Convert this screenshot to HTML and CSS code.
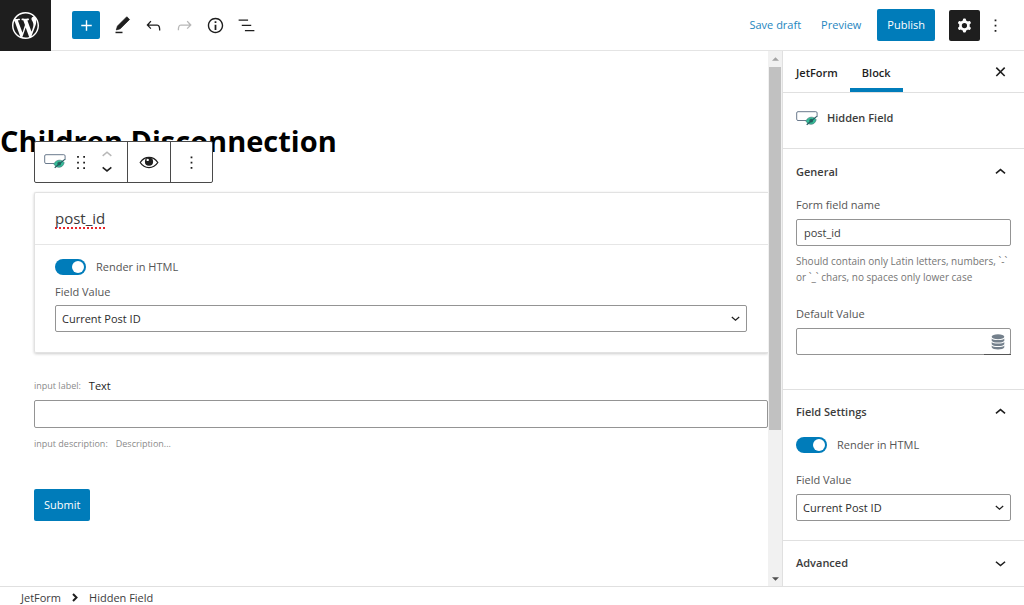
FILE: index.html
```html
<!DOCTYPE html>
<html lang="en">
<head>
<meta charset="utf-8">
<title>Edit form</title>
<link rel="stylesheet" href="styles.css">
</head>
<body>
<svg class="sprite" aria-hidden="true">
  <symbol id="i-wp" viewBox="0 0 20 20"><path d="M20 10c0-5.51-4.49-10-10-10C4.48 0 0 4.49 0 10c0 5.52 4.48 10 10 10 5.51 0 10-4.48 10-10zM7.78 15.37L4.37 6.22c.55-.02 1.17-.08 1.17-.08.5-.06.44-1.13-.06-1.11 0 0-1.45.11-2.37.11-.18 0-.37 0-.58-.01C4.12 2.69 6.87 1.11 10 1.11c2.33 0 4.45.87 6.05 2.34-.68-.11-1.65.39-1.65 1.58 0 .74.45 1.36.9 2.1.35.61.55 1.36.55 2.46 0 1.49-1.4 5-1.4 5l-3.03-8.37c.54-.02.82-.17.82-.17.5-.05.44-1.25-.06-1.22 0 0-1.44.12-2.38.12-.87 0-2.33-.12-2.33-.12-.5-.03-.56 1.2-.06 1.22l.92.08 1.26 3.41zM17.41 10c.24-.64.74-1.87.43-4.25.7 1.29 1.05 2.71 1.05 4.25 0 3.29-1.73 6.24-4.4 7.78.97-2.59 1.94-5.2 2.92-7.78zM6.1 18.09C3.12 16.65 1.11 13.53 1.11 10c0-1.3.23-2.48.72-3.59C3.25 10.3 4.67 14.2 6.1 18.09zm4.03-6.63l2.58 6.98c-.86.29-1.76.45-2.71.45-.79 0-1.57-.11-2.29-.33.81-2.38 1.62-4.74 2.42-7.1z"/></symbol>
  <symbol id="i-plus" viewBox="0 0 24 24"><path d="M18 11.2h-5.2V6h-1.6v5.2H6v1.6h5.2V18h1.6v-5.2H18z"/></symbol>
  <symbol id="i-edit" viewBox="0 0 24 24"><path d="M20.1 5.1L16.9 2 6.2 12.7l-1.3 4.4 4.5-1.3L20.1 5.1z" stroke="currentColor" stroke-width=".8"/><path d="M4 20.800h8v-1.700H4z"/></symbol>
  <symbol id="i-undo" viewBox="0 0 24 24"><path d="M18.3 11.7c-.6-.6-1.4-.9-2.3-.9H6.7l2.9-3.3-1.1-1-4.5 5L8.500 16l1-1-2.7-2.7H16c.5 0 .9.2 1.3.5 1 1 1 3.4 1 4.5v.3h1.5v-.2c0-1.5 0-4.3-1.5-5.7z"/></symbol>
  <symbol id="i-redo" viewBox="0 0 24 24"><path d="M15.6 6.5l-1.1 1 2.9 3.3H8c-.9 0-1.7.3-2.3.9-1.4 1.5-1.4 4.2-1.4 5.6v.2h1.5v-.3c0-1.1 0-3.5 1-4.5.3-.3.7-.5 1.3-.5h9.2L14.500 15l1.1 1.1 4.6-4.6-4.6-5z"/></symbol>
  <symbol id="i-info" viewBox="0 0 24 24"><path d="M12 3.2c-4.8 0-8.8 3.9-8.8 8.8 0 4.8 3.9 8.8 8.8 8.8 4.8 0 8.8-3.9 8.8-8.8 0-4.8-4-8.8-8.8-8.8zm0 16c-4 0-7.2-3.3-7.2-7.2C4.8 8 8 4.8 12 4.8s7.2 3.3 7.2 7.2c0 4-3.2 7.2-7.2 7.2zM11 17h2v-6h-2v6zm0-8h2V7h-2v2z"/></symbol>
  <symbol id="i-list" viewBox="0 0 24 24"><path d="M13.8 5.2H3v1.5h10.8V5.2zm-3.6 12v1.5H21v-1.5H10.2zm7.2-6H6.6v1.5h10.8v-1.5z"/></symbol>
  <symbol id="i-cog" viewBox="0 0 24 24"><path fill-rule="evenodd" d="M10.289 4.836A1 1 0 0111.275 4h1.306a1 1 0 01.987.836l.244 1.466c.787.26 1.503.679 2.108 1.218l1.393-.522a1 1 0 011.216.437l.653 1.13a1 1 0 01-.23 1.273l-1.148.944a6.025 6.025 0 010 2.435l1.149.946a1 1 0 01.23 1.272l-.653 1.13a1 1 0 01-1.216.437l-1.394-.522c-.605.54-1.32.958-2.108 1.218l-.244 1.466a1 1 0 01-.987.836h-1.306a1 1 0 01-.986-.836l-.244-1.466a5.995 5.995 0 01-2.108-1.218l-1.394.522a1 1 0 01-1.217-.436l-.653-1.131a1 1 0 01.23-1.272l1.149-.946a6.026 6.026 0 010-2.435l-1.148-.944a1 1 0 01-.23-1.272l.653-1.131a1 1 0 011.217-.437l1.393.522a5.994 5.994 0 012.108-1.218l.244-1.466zM14.929 12a3 3 0 11-6 0 3 3 0 016 0z"/></symbol>
  <symbol id="i-more" viewBox="0 0 24 24"><path d="M13 19h-2v-2h2v2zm0-6h-2v-2h2v2zm0-6h-2V5h2v2z"/></symbol>
  <symbol id="i-drag" viewBox="0 0 24 24"><path d="M7 6.500h2V4.500H7zM7 13h2v-2H7zM7 19.500h2v-2H7zM14 6.500h2V4.500h-2zM14 13h2v-2h-2zM14 19.500h2v-2h-2z"/></symbol>
  <symbol id="i-close" viewBox="0 0 24 24"><path d="M7.200 7.600l9.600 9.600M16.800 7.600l-9.600 9.600" fill="none" stroke="currentColor" stroke-width="1.800"/></symbol>
  <symbol id="i-down" viewBox="0 0 24 24"><path d="M6.800 10l5.200 4.300 5.200-4.300" fill="none" stroke="currentColor" stroke-width="1.800"/></symbol>
  <symbol id="i-up" viewBox="0 0 24 24"><path d="M6.800 13l5.200-4.300 5.200 4.300" fill="none" stroke="currentColor" stroke-width="1.800"/></symbol>
  <symbol id="i-right" viewBox="0 0 12 12"><path d="M4 2l3.500 3.500L4 9" fill="none" stroke="currentColor" stroke-width="2"/></symbol>
  <symbol id="i-eye" viewBox="0 0 20 14"><path d="M1.200 7.500C3.300 4.300 6.400 2.400 10 2.400s6.700 1.900 8.800 5.100c-2.100 3.200-5.200 5.100-8.800 5.100S3.300 10.700 1.200 7.500z" fill="none" stroke="currentColor" stroke-width="1.300"/><circle cx="10" cy="6.700" r="4.100"/><circle cx="8.700" cy="4.900" r="1.200" fill="#fff"/></symbol>
  <symbol id="i-hidden" viewBox="0 0 22 16"><path d="M10 9.500H2A1.300 1.300 0 0 1 .700 8.200V2A1.300 1.300 0 0 1 2 .700h17.800A1.300 1.300 0 0 1 21.100 2v4" fill="none" stroke="#6a7a8d" stroke-width="1"/><path d="M9.800 10c1.500-2.700 3.400-3.800 5.600-3.800 2 0 3.700.8 4.800 2.600-.9 3-2.700 4.500-5.200 4.500-2.100 0-3.900-1.100-5.200-3.300z" fill="#35bd98" stroke="#3a6f70" stroke-width=".6"/><circle cx="15.200" cy="9.700" r="1.900" fill="#26675f"/><path d="M10.700 13.800L20.800 5.400" stroke="#245b60" stroke-width="1.200"/></symbol>
  <symbol id="i-db" viewBox="0 0 14 16"><ellipse cx="7" cy="2.800" rx="6.300" ry="2.500"/><path d="M.700 4.600c1 2 11.600 2 12.600 0v2.100c-1 2.500-11.600 2.500-12.600 0zM.700 8.100c1 2 11.600 2 12.600 0v2.100c-1 2.500-11.600 2.500-12.600 0zM.700 11.600c1 2 11.600 2 12.600 0v1.600c-1 2.900-11.600 2.900-12.600 0z"/></symbol>
</svg>

<div class="app">
  <header class="topbar">
    <a class="logo" href="#" aria-label="View posts"><svg class="logo-icon"><use href="#i-wp"/></svg></a>
    <div class="tools">
      <button class="add" aria-label="Add block"><svg class="icon"><use href="#i-plus"/></svg></button>
      <button class="tool" aria-label="Edit"><svg class="icon"><use href="#i-edit"/></svg></button>
      <button class="tool" aria-label="Undo"><svg class="icon"><use href="#i-undo"/></svg></button>
      <button class="tool tool-off" aria-label="Redo"><svg class="icon"><use href="#i-redo"/></svg></button>
      <button class="tool" aria-label="Details"><svg class="icon"><use href="#i-info"/></svg></button>
      <button class="tool" aria-label="List view"><svg class="icon"><use href="#i-list"/></svg></button>
    </div>
    <div class="actions">
      <button class="link-btn">Save draft</button>
      <button class="link-btn">Preview</button>
      <button class="primary publish">Publish</button>
      <button class="settings" aria-label="Settings"><svg class="icon"><use href="#i-cog"/></svg></button>
      <button class="menu" aria-label="Options"><svg class="icon"><use href="#i-more"/></svg></button>
    </div>
  </header>

  <div class="body">
    <main class="canvas">
      <h1 class="title">Children Disconnection</h1>
      <div class="blocks">
        <div class="block-toolbar" role="toolbar" aria-label="Block tools">
          <div class="group group-main">
            <button class="tb" aria-label="Hidden Field"><svg class="field-icon"><use href="#i-hidden"/></svg></button>
            <button class="tb" aria-label="Drag"><svg class="icon"><use href="#i-drag"/></svg></button>
            <div class="movers">
              <button class="mover tool-off" aria-label="Move up"><svg class="mover-icon"><use href="#i-up"/></svg></button>
              <button class="mover" aria-label="Move down"><svg class="mover-icon"><use href="#i-down"/></svg></button>
            </div>
          </div>
          <div class="group"><button class="tb" aria-label="Show"><svg class="eye-icon"><use href="#i-eye"/></svg></button></div>
          <div class="group"><button class="tb" aria-label="More"><svg class="icon"><use href="#i-more"/></svg></button></div>
        </div>

        <section class="card">
          <div class="card-head"><span class="misspelled">post_id</span></div>
          <div class="card-body">
            <label class="toggle-row"><input class="toggle" type="checkbox" checked>Render in HTML</label>
            <label class="label" for="value-main">Field Value</label>
            <div class="select-wrap">
              <select class="field" id="value-main"><option>Current Post ID</option></select>
              <svg class="select-arrow"><use href="#i-down"/></svg>
            </div>
          </div>
        </section>

        <section class="text-block">
          <div class="meta"><span class="hint">input label:</span><label class="meta-label" for="text-input">Text</label></div>
          <input class="field" id="text-input" type="text">
          <div class="meta"><span class="hint">input description:</span><span class="hint">Description...</span></div>
        </section>

        <button class="primary submit">Submit</button>
      </div>
    </main>

    <div class="scrollbar" aria-hidden="true">
      <svg class="scroll-arrow" viewBox="0 0 8 4"><path d="M4 0l4 4H0z" fill="#a3a3a3"/></svg>
      <div class="track"><div class="thumb"></div></div>
      <svg class="scroll-arrow" viewBox="0 0 8 4"><path d="M0 0h8L4 4z" fill="#505050"/></svg>
    </div>

    <aside class="sidebar">
      <div class="tabs">
        <button class="tab">JetForm</button>
        <button class="tab tab-active">Block</button>
        <button class="close" aria-label="Close settings"><svg class="icon"><use href="#i-close"/></svg></button>
      </div>
      <div class="block-card"><svg class="field-icon"><use href="#i-hidden"/></svg><h2 class="block-name">Hidden Field</h2></div>
      <section class="panel panel-general">
        <h2 class="panel-head"><button class="panel-toggle">General<svg class="icon"><use href="#i-up"/></svg></button></h2>
        <label class="label" for="field-name">Form field name</label>
        <input class="field" id="field-name" type="text" value="post_id">
        <p class="help">Should contain only Latin letters, numbers, `-` or `_` chars, no spaces only lower case</p>
        <label class="label" for="default-value">Default Value</label>
        <div class="combo">
          <input class="field" id="default-value" type="text">
          <button class="preset" aria-label="Dynamic value"><svg class="db-icon"><use href="#i-db"/></svg></button>
        </div>
      </section>
      <section class="panel panel-settings">
        <h2 class="panel-head"><button class="panel-toggle">Field Settings<svg class="icon"><use href="#i-up"/></svg></button></h2>
        <label class="toggle-row"><input class="toggle" type="checkbox" checked>Render in HTML</label>
        <label class="label" for="value-side">Field Value</label>
        <div class="select-wrap">
          <select class="field" id="value-side"><option>Current Post ID</option></select>
          <svg class="select-arrow"><use href="#i-down"/></svg>
        </div>
      </section>
      <section class="panel">
        <h2 class="panel-head"><button class="panel-toggle">Advanced<svg class="icon"><use href="#i-down"/></svg></button></h2>
      </section>
    </aside>
  </div>

  <footer class="crumbs">
    <a class="crumb" href="#">JetForm</a>
    <svg class="crumb-arrow"><use href="#i-right"/></svg>
    <span>Hidden Field</span>
  </footer>
</div>
</body>
</html>
```

FILE: styles.css
```css
* { box-sizing: border-box; }
body {
  margin: 0;
  font: 11px/16px "Open Sans", "Noto Sans", sans-serif;
  color: #3c3c3c;
  background: #fff;
}
button, input, select { font: inherit; color: inherit; }
button { border: 0; padding: 0; background: none; display: flex; align-items: center; justify-content: center; }
h1, h2, p { margin: 0; }
svg { fill: currentColor; display: block; flex: none; }
.sprite { position: absolute; width: 0; height: 0; }
.icon { width: 21px; height: 21px; }

.app { display: flex; flex-direction: column; height: 100vh; }

.topbar { display: flex; align-items: center; height: 51px; flex: none; border-bottom: 1px solid #e4e4e4; color: #1e1e1e; }
.logo { display: flex; align-items: center; justify-content: center; width: 51px; height: 51px; margin-bottom: -1px; background: #1e1e1e; color: #fff; }
.logo-icon { width: 27px; height: 27px; }
.tools { display: flex; align-items: center; gap: 10px; margin-left: 21px; }
.add { width: 28px; height: 28px; border-radius: 2px; background: #007cba; color: #fff; margin-right: 2px; }
.tool { width: 21px; height: 28px; }
.tool-off { color: #b8b8b8; }
.actions { display: flex; align-items: center; margin-left: auto; padding-right: 18px; }
.link-btn { color: #1e86c0; margin-right: 20px; }
.primary { height: 32px; padding: 0 10px; border-radius: 2px; background: #007cba; color: #fff; }
.publish { margin-left: -4px; }
.settings { width: 31px; height: 31px; margin-left: 14px; border-radius: 2px; background: #1e1e1e; color: #fff; }
.menu { margin-left: 5px; }

.body { display: flex; flex: 1; min-height: 0; }
.canvas { flex: 1; min-width: 0; overflow: hidden; padding-top: 70px; }
.title { font-size: 29px; line-height: 40px; font-weight: 700; color: #000; }
.blocks { position: relative; padding: 31px 0 0 34px; }

.block-toolbar { position: absolute; left: 34px; top: -20px; display: flex; height: 42px; border: 1px solid #4a4a4a; border-radius: 2px; background: #fff; color: #1e1e1e; }
.group { display: flex; align-items: center; justify-content: center; width: 43px; }
.group + .group { border-left: 1px solid #4a4a4a; }
.group:last-child { width: 42px; }
.group-main { width: 92px; gap: 5px; padding-right: 2px; }
.movers { display: flex; flex-direction: column; }
.mover-icon { width: 20px; height: 20px; margin: -3px 0; }
.eye-icon { width: 20px; height: 14px; }
.field-icon { width: 22px; height: 16px; }

.card { border: 1px solid #e2e2e2; border-right: 0; border-radius: 2px 0 0 2px; box-shadow: 0 1px 3px rgba(0, 0, 0, .2); }
.card-head { padding: 15px 20px; border-bottom: 1px solid #e6e6e6; font-size: 15px; line-height: 21px; }
.misspelled { text-decoration: underline dotted #e5262b 2px; text-underline-offset: 3px; text-decoration-skip-ink: none; }
.card-body { padding: 13px 21px 20px 20px; }

.toggle-row { display: flex; align-items: center; gap: 10px; height: 17px; color: #555; }
.toggle { appearance: none; flex: none; width: 31px; height: 16px; margin: 0; padding: 2px; border-radius: 8px; background: #007cba; }
.toggle::before { content: ""; display: block; width: 12px; height: 12px; margin-left: auto; border-radius: 50%; background: #fff; }
.label { display: block; color: #555; }
.card .label { margin: 9px 0 5px; }
.field { display: block; width: 100%; height: 27px; padding: 0 7px; border: 1px solid #949494; border-radius: 2px; background: #fff; }
.select-wrap, .combo { position: relative; }
select.field { appearance: none; padding: 0 6px; color: #2c2c2c; }
.select-arrow { position: absolute; right: 3px; top: 5px; width: 17px; height: 17px; color: #1e1e1e; pointer-events: none; }

.text-block { margin-top: 25px; }
.meta { display: flex; gap: 8px; }
.hint { font-size: 9px; color: #8a8a8a; }
.meta-label { color: #1e1e1e; font-size: 11px; }
.text-block .field { height: 28px; margin: 6px 0 8px; }
.submit { margin-top: 37px; }

.scrollbar { display: flex; flex-direction: column; align-items: center; gap: 6px; width: 14px; padding: 6px 1px 5px; background: #f1f1f1; }
.scroll-arrow { width: 7px; height: 4px; }
.track { flex: 1; width: 100%; }
.thumb { height: 72%; background: #c1c1c1; }

.sidebar { width: 242px; flex: none; overflow: hidden; border-left: 1px solid #e0e0e0; }
.tabs { display: flex; height: 42px; border-bottom: 1px solid #e0e0e0; color: #1e1e1e; }
.tab { padding: 3px 12px 0 13px; font-weight: 600; }
.tab-active { border-bottom: 4px solid #007cba; padding: 6px 12px 0; }
.close { margin: 0 13px 0 auto; }
.block-card { display: flex; align-items: center; gap: 9px; height: 55px; padding: 0 13px; }
.block-card .field-icon { margin-top: -4px; }
.block-name, .panel-head { font-size: 11px; line-height: 16px; font-weight: 600; }
.block-name { margin-top: -5px; }
.panel { border-top: 1px solid #e0e0e0; padding: 0 13px; }
.panel-head { margin-bottom: 2px; }
.panel-toggle { width: 100%; height: 44px; justify-content: space-between; font-weight: 600; }
.panel-toggle .icon { color: #1e1e1e; }
.panel .label { margin-bottom: 6px; }
.panel-general { padding: 1px 13px 34px; }
.panel-general .panel-head { margin-bottom: 3px; }
.help { margin: 7px 0 21px; font-size: 10px; line-height: 16px; color: #757575; }
.preset { position: absolute; right: 0; top: 1px; width: 27px; height: 26px; border-bottom: 1px solid #555; }
.db-icon { width: 14px; height: 16px; color: #74808c; }
.panel-settings { padding-bottom: 19px; }
.panel-settings .toggle-row { margin-bottom: 19px; }

.crumbs { display: flex; align-items: center; gap: 8px; height: 19px; flex: none; padding: 3px 21px 0; border-top: 1px solid #e0e0e0; overflow: hidden; }
.crumb { color: inherit; text-decoration: none; }
.crumb-arrow { width: 12px; height: 12px; color: #1e1e1e; }
```
